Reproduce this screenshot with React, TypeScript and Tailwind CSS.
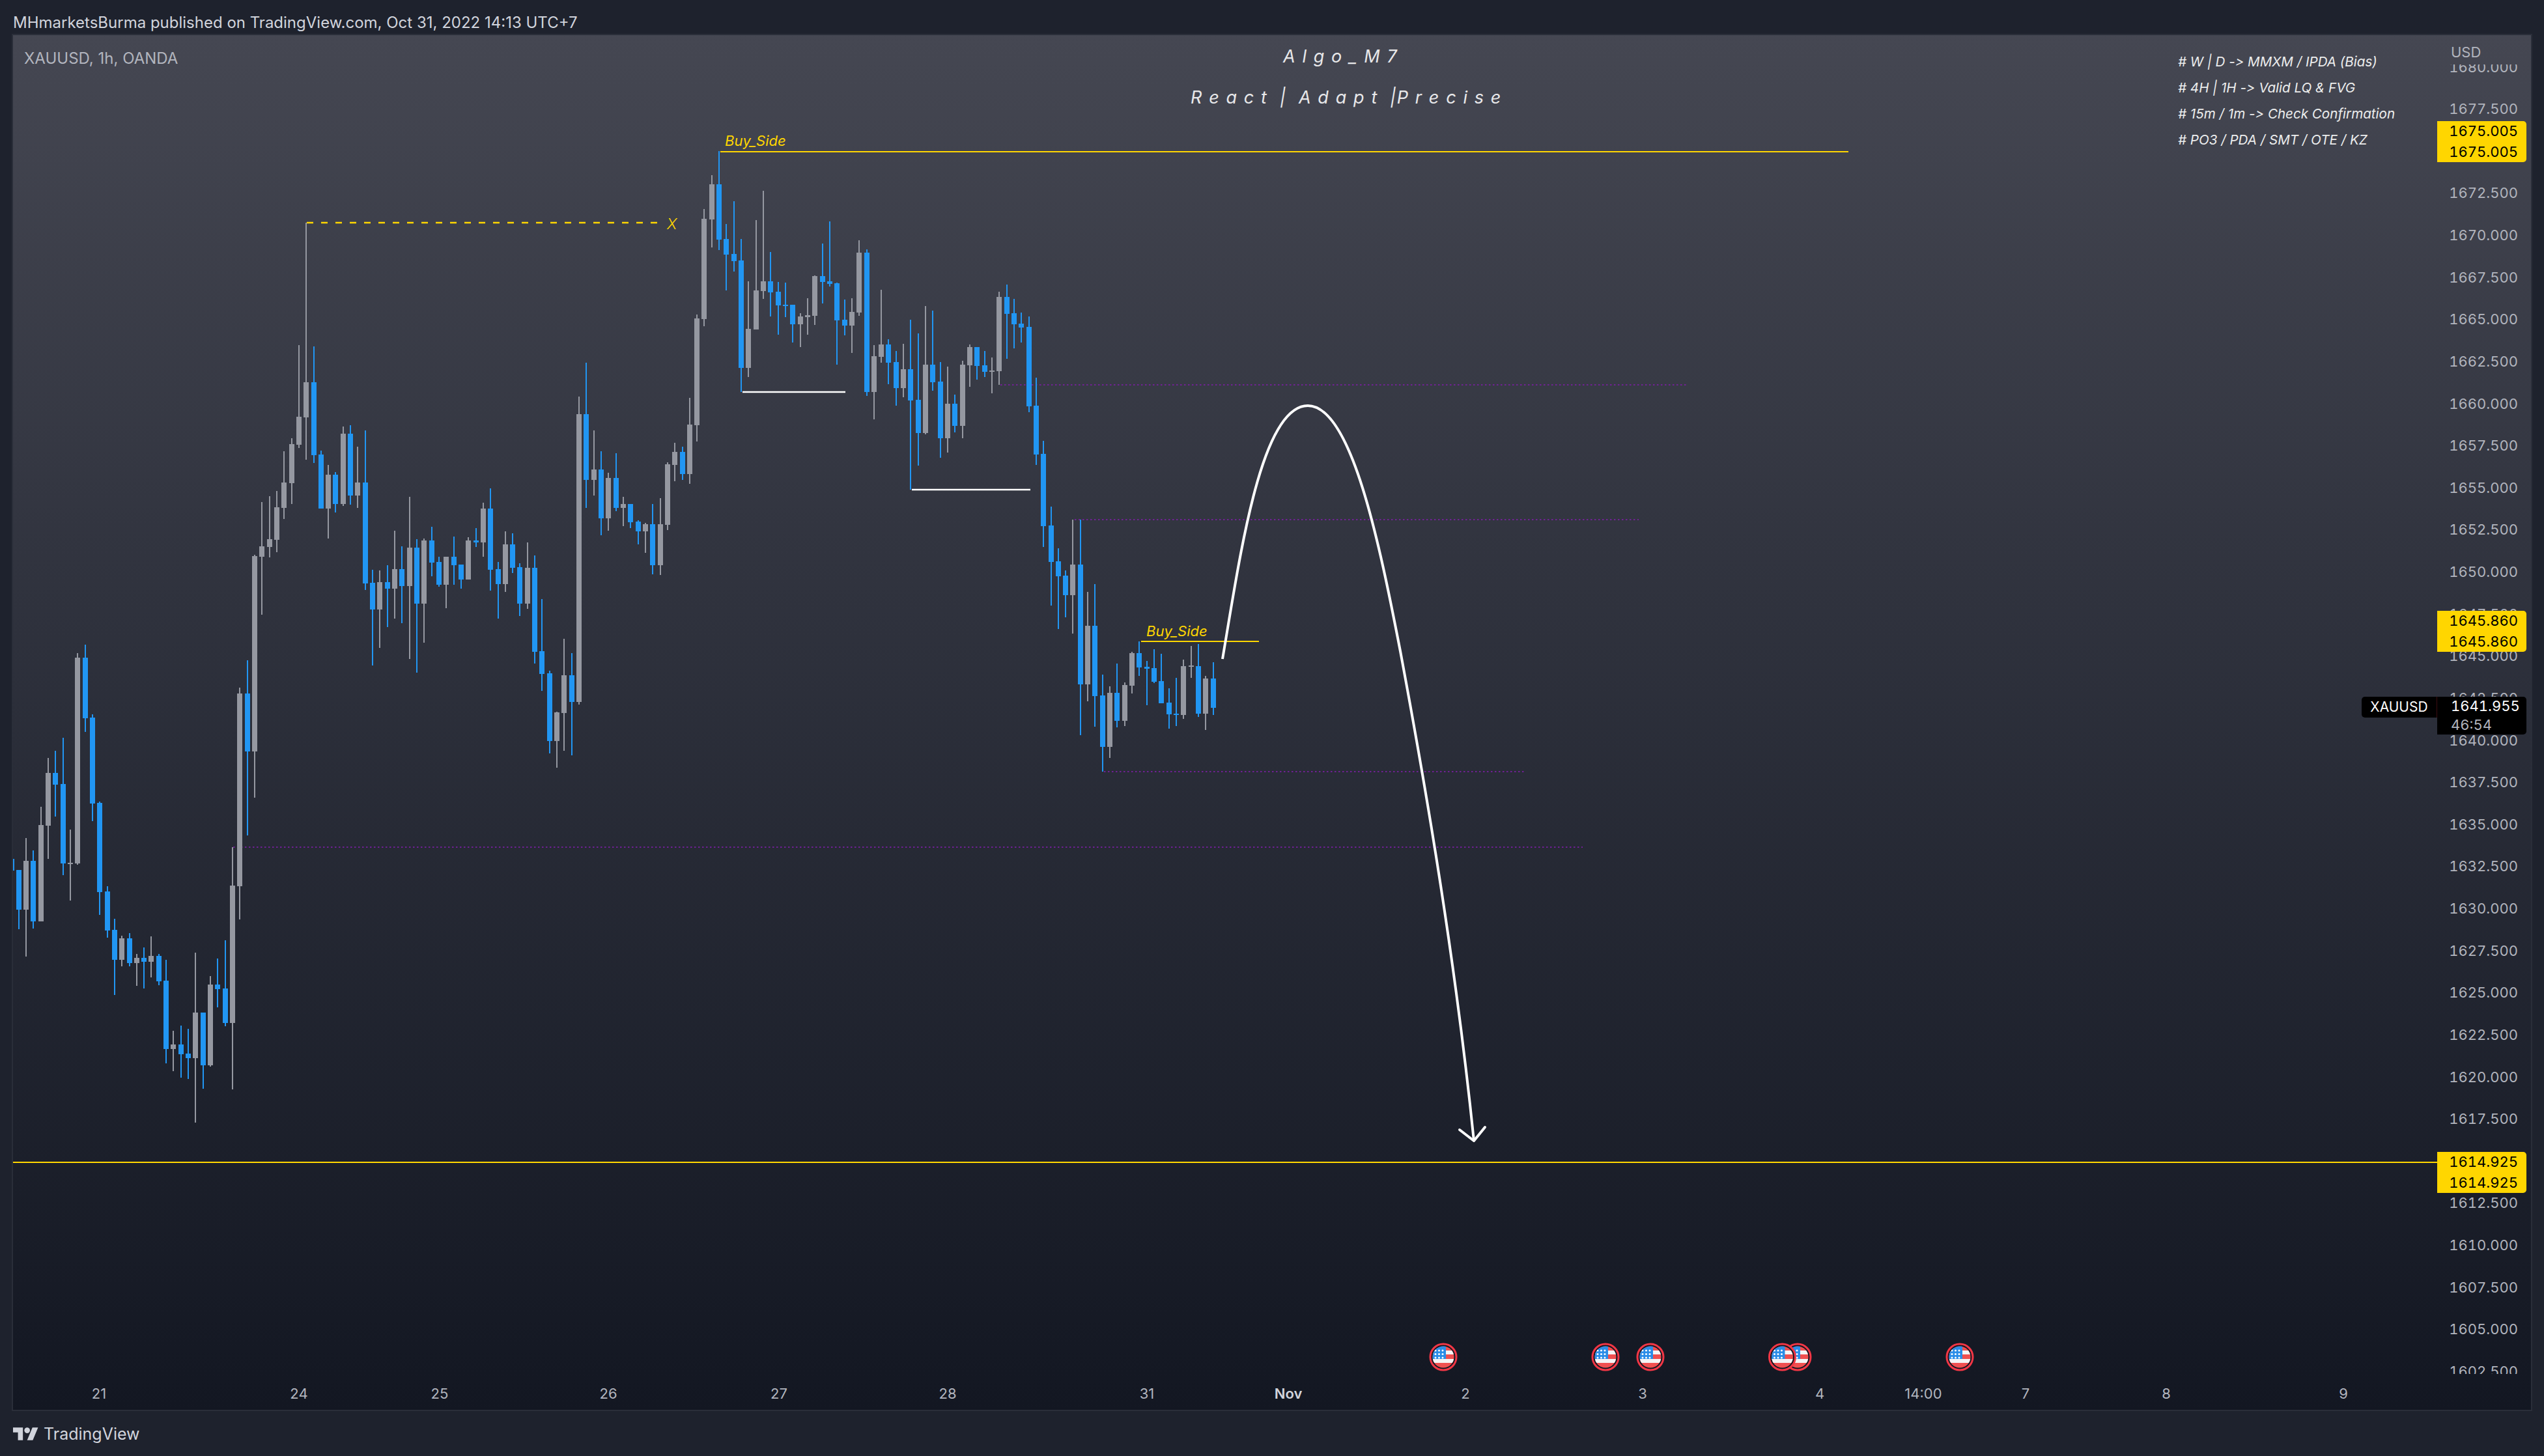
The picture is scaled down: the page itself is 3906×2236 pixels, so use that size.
// XAUUSD 1h snapshot, coordinates below are page pixels
const FONT = "font-['Inter','Liberation_Sans',sans-serif]"

// [blue?, bodyTop, bodyBottom, wickTop, wickBottom]
const CANDLES: number[][] = [
  [1,1336,1397,1336,1427],[0,1322,1397,1287,1469],[1,1322,1415,1306,1426],[0,1267,1415,1239,1415],[0,1187,1268,1164,1319],
  [1,1187,1205,1153,1254],[1,1204,1326,1133,1344],[0,1325,1327,1274,1383],[0,1010,1326,1003,1328],[1,1010,1103,990,1124],
  [1,1102,1234,1097,1261],[1,1233,1370,1231,1405],[1,1369,1429,1361,1440],[1,1428,1474,1411,1528],[0,1441,1474,1437,1484],
  [1,1441,1479,1433,1484],[0,1471,1479,1465,1514],[1,1471,1477,1455,1518],[0,1468,1477,1438,1501],[1,1468,1507,1465,1513],
  [1,1506,1611,1474,1633],[0,1604,1611,1583,1645],[1,1604,1619,1575,1655],[1,1618,1625,1580,1657],[0,1555,1625,1463,1724],
  [1,1555,1636,1555,1672],[0,1512,1636,1499,1638],[1,1512,1519,1472,1547],[1,1518,1571,1444,1576],[0,1360,1571,1301,1673],
  [0,1065,1361,1056,1412],[1,1065,1154,1014,1283],[0,854,1154,852,1225],[0,839,855,771,944],[0,828,840,762,856],
  [0,779,829,754,848],[0,741,780,693,797],[0,682,742,673,774],[0,640,683,530,688],[0,587,641,342,706],
  [1,587,699,532,711],[1,698,781,692,781],[0,729,781,714,827],[1,729,774,725,787],[0,666,774,655,777],
  [1,666,761,653,775],[0,741,761,686,780],[1,741,896,661,906],[1,895,936,875,1022],[0,894,936,876,995],
  [1,894,904,868,963],[0,874,904,815,950],[1,874,900,839,957],[0,841,900,763,1012],[1,841,927,828,1033],
  [0,830,927,827,987],[1,830,864,809,885],[1,863,898,855,901],[0,855,898,855,934],[1,855,868,824,898],
  [1,867,890,867,904],[0,830,890,825,890],[1,830,833,811,840],[0,781,833,772,855],[1,781,875,750,907],
  [1,874,897,863,950],[0,836,897,816,909],[1,836,872,819,880],[1,871,927,865,946],[0,872,927,833,935],
  [1,872,1001,853,1019],[1,1000,1035,920,1061],[1,1034,1138,1030,1157],[0,1094,1138,1093,1179],[0,1037,1095,981,1153],
  [1,1037,1078,1003,1160],[0,636,1078,609,1082],[1,636,737,557,780],[0,721,737,661,761],[1,721,796,693,822],
  [0,734,796,726,815],[1,734,780,696,785],[0,774,780,763,808],[1,774,802,774,811],[1,801,816,799,836],
  [0,805,816,803,849],[1,805,868,774,882],[0,805,868,765,883],[0,713,806,710,814],[0,694,714,680,739],
  [1,694,728,686,737],[0,652,728,611,743],[0,489,653,483,678],[0,336,490,321,501],[0,283,337,269,380],
  [1,283,368,232,384],[1,367,391,344,446],[1,390,401,309,417],[1,400,565,367,602],[0,505,565,432,579],
  [0,446,506,338,506],[0,432,447,293,459],[1,432,449,387,486],[1,448,469,433,514],[1,468,470,434,487],
  [1,468,498,468,526],[0,486,498,481,533],[0,484,487,458,514],[0,424,485,423,499],[1,424,433,374,466],
  [1,432,436,340,440],[1,435,492,434,560],[1,491,500,460,515],[0,479,500,458,542],[0,388,480,369,485],
  [1,388,602,383,608],[0,547,602,530,644],[0,529,548,445,557],[1,529,557,521,590],[1,556,596,539,623],
  [0,567,596,528,610],[1,567,615,491,752],[1,614,665,512,715],[0,560,665,470,667],[1,560,587,477,600],
  [1,586,673,556,703],[0,620,673,563,695],[1,620,654,606,664],[0,560,654,554,673],[0,533,561,529,594],
  [1,533,562,533,583],[1,561,571,539,579],[0,569,571,549,604],[0,456,570,448,591],[1,456,482,437,551],
  [1,481,498,459,535],[1,497,503,480,526],[1,502,624,486,633],[1,623,698,580,714],[1,697,808,677,840],
  [1,807,863,778,930],[1,862,885,842,966],[1,884,914,876,948],[0,867,914,798,973],[1,867,1051,798,1129],
  [0,961,1051,909,1077],[1,961,1069,897,1116],[1,1068,1147,1036,1185],[0,1064,1147,1054,1164],[1,1064,1107,1019,1117],
  [0,1052,1107,1048,1115],[0,1003,1053,1001,1065],[1,1003,1025,985,1038],[1,1024,1027,1015,1083],[1,1026,1047,997,1049],
  [1,1046,1080,1004,1080],[1,1079,1097,1057,1119],[1,1096,1098,1041,1115],[0,1023,1098,1013,1104],[0,1022,1024,992,1041],
  [1,1023,1096,989,1101],[0,1042,1096,1038,1121],[1,1042,1087,1017,1098],
]

const PRICES = ['1680.000','1677.500','1675.000','1672.500','1670.000','1667.500','1665.000','1662.500','1660.000','1657.500','1655.000','1652.500','1650.000','1647.500','1645.000','1642.500','1640.000','1637.500','1635.000','1632.500','1630.000','1627.500','1625.000','1622.500','1620.000','1617.500','1615.000','1612.500','1610.000','1607.500','1605.000','1602.500']

const TICKS: [string, number][] = [['21',132],['24',439],['25',655],['26',914],['27',1176],['28',1435],['31',1741],['Nov',1958],['2',2230],['3',2502],['4',2774],['14:00',2933],['7',3090],['8',3306],['9',3578]]

const FLAGS = [2216, 2465, 2534, 2760, 2736.5, 3009]

const NOTES = ['# W | D -> MMXM / IPDA (Bias)', '# 4H | 1H -> Valid LQ & FVG', '# 15m / 1m -> Check Confirmation', '# PO3 / PDA / SMT / OTE / KZ']

function UsFlag({ cx, cy }: { cx: number; cy: number }) {
  const id = `flag-${Math.round(cx)}`
  const stars = [0, 1, 2].flatMap(r => [0, 1, 2].map(c => [cx - 12 + c * 5.5, cy - 10 + r * 5.5]))
  return (
    <g>
      <clipPath id={id}><circle cx={cx} cy={cy} r={16.5} /></clipPath>
      <circle cx={cx} cy={cy} r={20} fill="#131722" stroke="#f23645" strokeWidth={3} />
      <g clipPath={`url(#${id})`}>
        <rect x={cx - 17} y={cy - 17} width={34} height={34} fill="#f05050" />
        <rect x={cx - 17} y={cy - 10} width={34} height={6} fill="#f5f5f5" />
        <rect x={cx - 17} y={cy + 3} width={34} height={6} fill="#f5f5f5" />
        <rect x={cx - 17} y={cy - 17} width={21} height={20} fill="#2b8de8" />
        {stars.map(([x, y], i) => <circle key={i} cx={x} cy={y} r={1.5} fill="#fff" />)}
      </g>
    </g>
  )
}

function ChartDrawing() {
  return (
    <svg className="absolute inset-0" width={3866} height={2111} viewBox="20 54 3866 2111">
      {/* dotted levels */}
      <g stroke="#7b1fa2" strokeOpacity={0.85} strokeWidth={2} strokeDasharray="2.5 3.5">
        <line x1={358} y1={1301} x2={2430} y2={1301} />
        <line x1={1536} y1={591} x2={2590} y2={591} />
        <line x1={1650} y1={798} x2={2516} y2={798} />
        <line x1={1695} y1={1185} x2={2341} y2={1185} />
      </g>
      <rect x={20} y={1319} width={2} height={18} fill="#2196f3" />
      <g shapeRendering="crispEdges">
        {CANDLES.map(([blue, top, bottom, high, low], i) => {
          const c = 28.7 + 11.32 * i
          const fill = blue ? '#2196f3' : '#9598a1'
          return (
            <g key={i} fill={fill}>
              <rect x={Math.round(c - 1)} y={high} width={2} height={low - high} />
              <rect x={Math.round(c - 4)} y={top} width={8} height={Math.max(bottom - top, 2)} />
            </g>
          )
        })}
      </g>
      {/* levels */}
      <line x1={471} y1={342} x2={1012} y2={342} stroke="#ffd600" strokeWidth={2.5} strokeDasharray="10 12" />
      <line x1={1106} y1={233} x2={2838} y2={233} stroke="#ffd600" strokeWidth={2} />
      <line x1={1752} y1={985} x2={1933} y2={985} stroke="#ffd600" strokeWidth={2} />
      <line x1={20} y1={1785} x2={3742} y2={1785} stroke="#ffd600" strokeWidth={2} />
      <line x1={1140} y1={602} x2={1298} y2={602} stroke="#fff" strokeWidth={2.5} />
      <line x1={1400} y1={752} x2={1582} y2={752} stroke="#fff" strokeWidth={2.5} />
      {/* projected path */}
      <path
        d="M1877 1012 C1903 860 1935 623 2008 623 C2075 623 2118 835 2150 1000 C2192 1225 2235 1480 2263 1752"
        fill="none" stroke="#fff" strokeWidth={4}
      />
      <path d="M2241 1735 L2263 1752 L2280 1731" fill="none" stroke="#fff" strokeWidth={4} strokeLinecap="round" strokeLinejoin="round" />
      {FLAGS.map(x => <UsFlag key={x} cx={x} cy={2084} />)}
    </svg>
  )
}

function TagPair({ value, className }: { value: string; className: string }) {
  return (
    <div className={`absolute left-[3722px] flex w-[137px] flex-col rounded-r-[5px] bg-[#ffd600] pr-[13px] text-right text-[22px] leading-[31.5px] text-black tabular-nums ${className}`}>
      <span>{value}</span>
      <span>{value}</span>
    </div>
  )
}

export default function App() {
  return (
    <div className={`flex h-[2236px] w-[3906px] flex-col overflow-hidden bg-[#1e222d] ${FONT}`}>
      <div className="flex h-[54px] items-center px-[20px] pt-[16px] text-[24px] text-[#d1d4dc]">
        MHmarketsBurma published on TradingView.com, Oct 31, 2022 14:13 UTC+7
      </div>

      <div className="relative mx-[20px] h-[2111px] w-[3866px] bg-linear-to-b from-[#454752] to-[#131722] ring-2 ring-[#2a2e39]">
        <ChartDrawing />

        <div className="absolute left-[17px] top-[24px] text-[24px] leading-[24px] text-[#b2b5be]">XAUUSD, 1h, OANDA</div>

        {/* title */}
        <div className="absolute left-[1808px] top-[18px] flex flex-col gap-[33px] whitespace-pre text-[27px] italic leading-[30px] tracking-[1.6px] text-[#e8e8ea]">
          <span className="ml-[142px]">A l g o _ M 7</span>
          <span>{'R e a c t  |  A d a p t  |P r e c i s e'}</span>
        </div>

        {/* notes */}
        <div className="absolute left-[3324px] top-[21px] flex flex-col whitespace-nowrap text-[20.6px] italic leading-[40px] text-[#eceded] [font-feature-settings:'calt'_0,'liga'_0]">
          {NOTES.map(n => <span key={n}>{n}</span>)}
        </div>

        {/* drawing labels */}
        <span className="absolute left-[1093px] top-[150px] text-[22px] italic leading-[24px] text-[#ffd600]">Buy_Side</span>
        <span className="absolute left-[1004px] top-[278px] text-[23px] font-light italic leading-[24px] text-[#ffd600]">X</span>
        <span className="absolute left-[1740px] top-[903px] text-[22px] italic leading-[24px] text-[#ffd600]">Buy_Side</span>

        {/* price axis */}
        <div className="absolute right-[20px] top-[45px] h-[2011px] w-[130px] overflow-hidden">
          <div className="mt-[-28.3px] flex flex-col text-right text-[22px] text-[#b2b5be] tabular-nums">
            {PRICES.map(p => <div key={p} className="flex h-[64.63px] items-center justify-end">{p}</div>)}
          </div>
        </div>
        <span className="absolute left-[3743px] top-[14px] text-[22px] leading-[24px] text-[#b2b5be]">USD</span>

        <TagPair value="1675.005" className="top-[132px]" />
        <TagPair value="1645.860" className="top-[884px]" />
        <TagPair value="1614.925" className="top-[1715px]" />

        {/* last price */}
        <div className="absolute left-[3606px] top-[1016px] flex h-[32px] w-[116px] items-center justify-center rounded-l-[5px] border-r border-[#3a0d10] bg-black text-[21px] text-white">XAUUSD</div>
        <div className="absolute left-[3722px] top-[1016px] flex h-[58px] w-[137px] flex-col rounded-r-[5px] bg-black pl-[21px] text-[22px] leading-[29px] tabular-nums">
          <span className="text-white">1641.955</span>
          <span className="text-[#b2b5be]">46:54</span>
        </div>

        {/* time axis */}
        {TICKS.map(([t, x]) => (
          <span
            key={t}
            className={`absolute top-[2074px] -translate-x-1/2 text-[22px] leading-[24px] ${t === 'Nov' ? 'font-semibold text-[#d1d4dc]' : 'text-[#b2b5be]'}`}
            style={{ left: x }}
          >
            {t}
          </span>
        ))}
      </div>

      <div className="flex flex-1 items-center gap-[8px] px-[20px] pt-[3px]">
        <svg width={39} height={20} viewBox="0 4 36 18" fill="#d1d4dc">
          <path d="M14 22H7V11H0V4h14v18zM28 22h-8l7.5-18h8L28 22z" />
          <circle cx={20} cy={8} r={4} />
        </svg>
        <span className="text-[25px] leading-[30px] text-[#d1d4dc]">TradingView</span>
      </div>
    </div>
  )
}
